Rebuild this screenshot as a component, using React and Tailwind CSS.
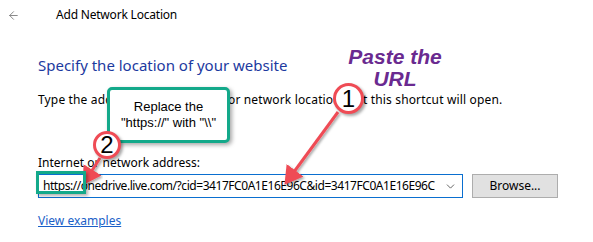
import { ChevronDown, ArrowLeft } from 'lucide-react';

const ui = { fontFamily: '"Noto Sans", "Open Sans", sans-serif' };
const arial = { fontFamily: '"Liberation Sans", Arial, sans-serif' };

function Marker({ n, size }) {
  return (
    <div
      className={`${size} rounded-full border-[3px] border-[#ef4b55] bg-white flex items-center justify-center text-[24px] leading-none text-black shadow-[2px_2px_3px_rgba(0,0,0,0.35)]`}
      style={arial}
    >
      {n}
    </div>
  );
}

export default function App() {
  return (
    <div className="relative w-[593px] h-[242px] bg-white overflow-hidden text-black" style={ui}>
      {/* title bar */}
      <div className="flex items-center h-[30px] pl-[7px]">
        <ArrowLeft className="h-[13px] w-[13px] text-[#777]" strokeWidth={1.6} />
        <span className="ml-[36px] text-[12px] tracking-[-0.2px]">Add Network Location</span>
      </div>

      <div className="pl-[38px] pt-[24px]">
        <h1 className="text-[15px] leading-[22px] text-[#1c3aa0]">Specify the location of your website</h1>
        <p className="mt-[16px] text-[12px] leading-[16px] tracking-[0.15px]">
          Type the address of the website, or network location that this shortcut will open.
        </p>

        <div className="mt-[47px] text-[12px] leading-[16px]">Internet or network address:</div>
        <div className="mt-[3px] flex items-center gap-[9px]">
          <div className="flex items-center w-[425px] h-[24px] border border-[#0a6fd0] pl-[4px] pr-[5px]">
            <span className="flex-1 text-[12px] tracking-[-0.45px] whitespace-nowrap overflow-hidden">
              https://onedrive.live.com/?cid=3417FC0A1E16E96C&amp;id=3417FC0A1E16E96C
            </span>
            <ChevronDown className="h-[13px] w-[13px] text-[#444]" strokeWidth={1.5} />
          </div>
          <button className="w-[86px] h-[24px] bg-[#e1e1e1] border border-[#adadad] text-[12px]">Browse...</button>
        </div>

        <a className="inline-block mt-[14px] text-[12px] text-[#1a5fc8] underline">View examples</a>
      </div>

      {/* annotations */}
      <svg className="absolute inset-0 pointer-events-none" width="593" height="242">
        <defs>
          <marker id="head" markerWidth="7" markerHeight="7" refX="4" refY="3.5" orient="auto" markerUnits="strokeWidth">
            <path d="M0,0 L6,3.5 L0,7 Z" fill="#ef4b55" />
          </marker>
          <filter id="sh" x="-20%" y="-20%" width="140%" height="140%">
            <feDropShadow dx="1.5" dy="1.5" stdDeviation="1" floodOpacity="0.35" />
          </filter>
        </defs>
        <line x1="338" y1="112" x2="288" y2="180" stroke="#ef4b55" strokeWidth="3" markerEnd="url(#head)" filter="url(#sh)" />
        <line x1="100" y1="158" x2="86" y2="180" stroke="#ef4b55" strokeWidth="3" markerEnd="url(#head)" filter="url(#sh)" />
      </svg>

      <div className="absolute left-[36px] top-[171px] w-[50px] h-[23px] border-[3px] border-[#13a98a] shadow-[2px_2px_3px_rgba(0,0,0,0.3)]" />

      <div
        className="absolute left-[107px] top-[87px] w-[123px] h-[56px] rounded-[5px] border-[3px] border-[#13a98a] bg-white flex flex-col items-center justify-center text-[13px] leading-[16px] shadow-[2px_2px_4px_rgba(0,0,0,0.35)]"
        style={arial}
      >
        <span>Replace the</span>
        <span>"https://" with "\\"</span>
      </div>

      <div className="absolute left-[93px] top-[131px]">
        <Marker n="2" size="h-[28px] w-[28px]" />
      </div>
      <div className="absolute left-[333px] top-[83px]">
        <Marker n="1" size="h-[31px] w-[31px]" />
      </div>

      <div
        className="absolute left-[345px] top-[46px] w-[100px] text-center text-[21px] leading-[22px] font-bold italic text-[#6a2a90]"
        style={arial}
      >
        Paste the
        <br />
        URL
      </div>
    </div>
  );
}
